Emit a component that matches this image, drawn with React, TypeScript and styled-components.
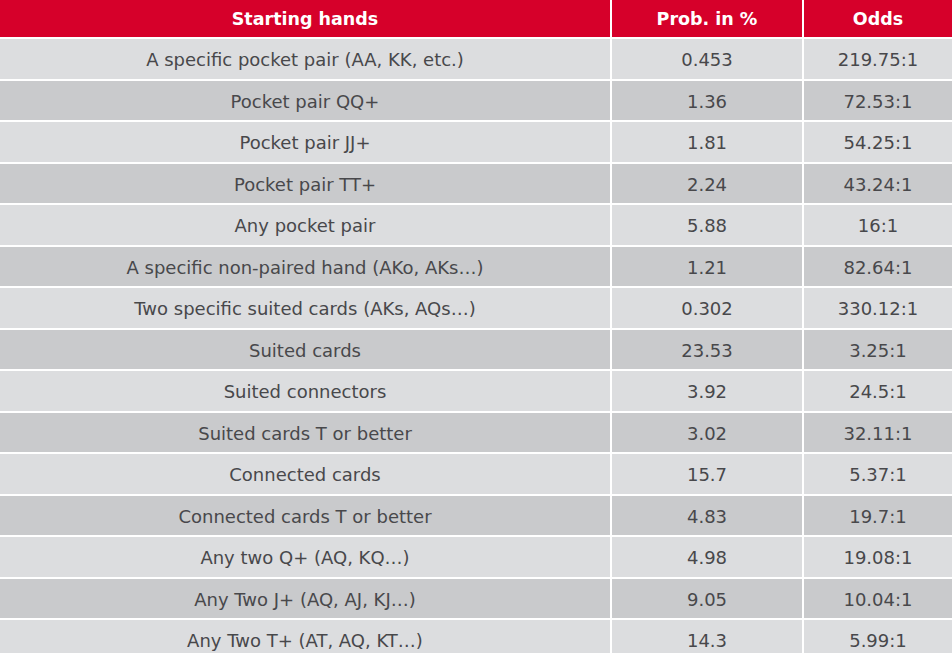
import React from "react";
import styled, { createGlobalStyle } from "styled-components";

const Global = createGlobalStyle`
  html, body { margin: 0; padding: 0; background: #ffffff; }
  body { font-family: "DejaVu Sans", Verdana, sans-serif; }
`;

const Table = styled.div`
  display: grid;
  grid-template-columns: 610px 190px 148px;
  column-gap: 2px;
  row-gap: 2px;
  width: 952px;
  background: #ffffff;
`;

const HeadCell = styled.div`
  height: 37px;
  box-sizing: border-box;
  padding-top: 1px;
  background: #d6002a;
  color: #ffffff;
  font-weight: bold;
  font-size: 17.5px;
  display: flex;
  align-items: center;
  justify-content: center;
`;

const Cell = styled.div<{ $dark: boolean }>`
  height: 39.5px;
  box-sizing: border-box;
  padding-top: 2px;
  background: ${(p) => (p.$dark ? "#c9cacc" : "#dcdddf")};
  color: #48484b;
  font-size: 18px;
  display: flex;
  align-items: center;
  justify-content: center;
  white-space: nowrap;
`;

const rows: [string, string, string][] = [
  ["A specific pocket pair (AA, KK, etc.)", "0.453", "219.75:1"],
  ["Pocket pair QQ+", "1.36", "72.53:1"],
  ["Pocket pair JJ+", "1.81", "54.25:1"],
  ["Pocket pair TT+", "2.24", "43.24:1"],
  ["Any pocket pair", "5.88", "16:1"],
  ["A specific non-paired hand (AKo, AKs…)", "1.21", "82.64:1"],
  ["Two specific suited cards (AKs, AQs…)", "0.302", "330.12:1"],
  ["Suited cards", "23.53", "3.25:1"],
  ["Suited connectors", "3.92", "24.5:1"],
  ["Suited cards T or better", "3.02", "32.11:1"],
  ["Connected cards", "15.7", "5.37:1"],
  ["Connected cards T or better", "4.83", "19.7:1"],
  ["Any two Q+ (AQ, KQ…)", "4.98", "19.08:1"],
  ["Any Two J+ (AQ, AJ, KJ…)", "9.05", "10.04:1"],
  ["Any Two T+ (AT, AQ, KT…)", "14.3", "5.99:1"],
];

export default function App() {
  return (
    <>
      <Global />
      <Table>
        <HeadCell>Starting hands</HeadCell>
        <HeadCell>Prob. in %</HeadCell>
        <HeadCell>Odds</HeadCell>
        {rows.map((r, i) => (
          <React.Fragment key={i}>
            <Cell $dark={i % 2 === 1}>{r[0]}</Cell>
            <Cell $dark={i % 2 === 1}>{r[1]}</Cell>
            <Cell $dark={i % 2 === 1}>{r[2]}</Cell>
          </React.Fragment>
        ))}
      </Table>
    </>
  );
}
